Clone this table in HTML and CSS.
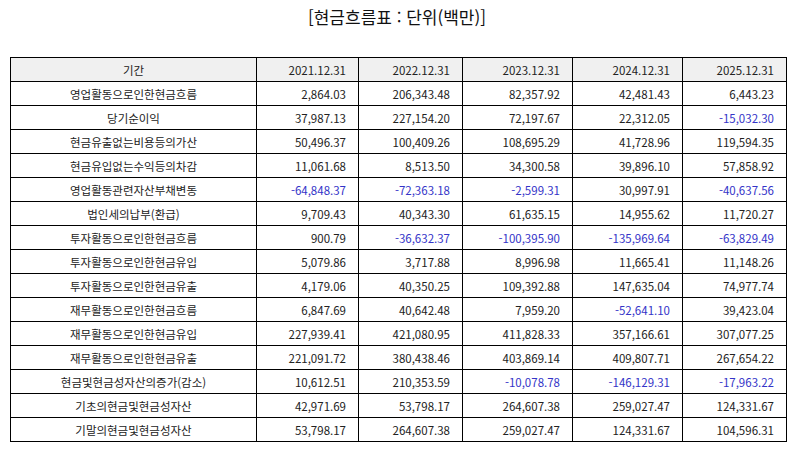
FILE: index.html
```html
<!DOCTYPE html>
<html lang="ko">
<head>
<meta charset="utf-8">
<link rel="stylesheet" href="styles.css">
</head>
<body>
<div class="title">[현금흐름표 : 단위(백만)]</div>
<table class="cf">
<colgroup>
<col class="c0"><col class="c1"><col class="c2"><col class="c3"><col class="c4"><col class="c5">
</colgroup>
<thead>
<tr><th>기간</th><th class="num">2021.12.31</th><th class="num">2022.12.31</th><th class="num">2023.12.31</th><th class="num">2024.12.31</th><th class="num">2025.12.31</th></tr>
</thead>
<tbody>
<tr><td>영업활동으로인한현금흐름</td><td class="num">2,864.03</td><td class="num">206,343.48</td><td class="num">82,357.92</td><td class="num">42,481.43</td><td class="num">6,443.23</td></tr>
<tr><td>당기순이익</td><td class="num">37,987.13</td><td class="num">227,154.20</td><td class="num">72,197.67</td><td class="num">22,312.05</td><td class="num neg">-15,032.30</td></tr>
<tr><td>현금유출없는비용등의가산</td><td class="num">50,496.37</td><td class="num">100,409.26</td><td class="num">108,695.29</td><td class="num">41,728.96</td><td class="num">119,594.35</td></tr>
<tr><td>현금유입없는수익등의차감</td><td class="num">11,061.68</td><td class="num">8,513.50</td><td class="num">34,300.58</td><td class="num">39,896.10</td><td class="num">57,858.92</td></tr>
<tr><td>영업활동관련자산부채변동</td><td class="num neg">-64,848.37</td><td class="num neg">-72,363.18</td><td class="num neg">-2,599.31</td><td class="num">30,997.91</td><td class="num neg">-40,637.56</td></tr>
<tr><td>법인세의납부(환급)</td><td class="num">9,709.43</td><td class="num">40,343.30</td><td class="num">61,635.15</td><td class="num">14,955.62</td><td class="num">11,720.27</td></tr>
<tr><td>투자활동으로인한현금흐름</td><td class="num">900.79</td><td class="num neg">-36,632.37</td><td class="num neg">-100,395.90</td><td class="num neg">-135,969.64</td><td class="num neg">-63,829.49</td></tr>
<tr><td>투자활동으로인한현금유입</td><td class="num">5,079.86</td><td class="num">3,717.88</td><td class="num">8,996.98</td><td class="num">11,665.41</td><td class="num">11,148.26</td></tr>
<tr><td>투자활동으로인한현금유출</td><td class="num">4,179.06</td><td class="num">40,350.25</td><td class="num">109,392.88</td><td class="num">147,635.04</td><td class="num">74,977.74</td></tr>
<tr><td>재무활동으로인한현금흐름</td><td class="num">6,847.69</td><td class="num">40,642.48</td><td class="num">7,959.20</td><td class="num neg">-52,641.10</td><td class="num">39,423.04</td></tr>
<tr><td>재무활동으로인한현금유입</td><td class="num">227,939.41</td><td class="num">421,080.95</td><td class="num">411,828.33</td><td class="num">357,166.61</td><td class="num">307,077.25</td></tr>
<tr><td>재무활동으로인한현금유출</td><td class="num">221,091.72</td><td class="num">380,438.46</td><td class="num">403,869.14</td><td class="num">409,807.71</td><td class="num">267,654.22</td></tr>
<tr><td>현금및현금성자산의증가(감소)</td><td class="num">10,612.51</td><td class="num">210,353.59</td><td class="num neg">-10,078.78</td><td class="num neg">-146,129.31</td><td class="num neg">-17,963.22</td></tr>
<tr><td>기초의현금및현금성자산</td><td class="num">42,971.69</td><td class="num">53,798.17</td><td class="num">264,607.38</td><td class="num">259,027.47</td><td class="num">124,331.67</td></tr>
<tr><td>기말의현금및현금성자산</td><td class="num">53,798.17</td><td class="num">264,607.38</td><td class="num">259,027.47</td><td class="num">124,331.67</td><td class="num">104,596.31</td></tr>
</tbody>
</table>
</body>
</html>
```
FILE: styles.css
```css
html, body {
  margin: 0;
  padding: 0;
  background: #ffffff;
}
body {
  font-family: "Noto Sans CJK KR", "Noto Sans", sans-serif;
  color: #222222;
}
.title {
  height: 39px;
  padding-top: 3px;
  box-sizing: border-box;
  text-align: center;
  font-size: 17px;
  line-height: 28px;
  color: #111111;
  margin-bottom: 18px;
}
.cf {
  margin-left: 10px;
  border-collapse: collapse;
  table-layout: fixed;
  width: 776px;
  font-size: 11.5px;
}
.c0 { width: 246px; }
.c1 { width: 102px; }
.c2 { width: 104px; }
.c3 { width: 110px; }
.c4 { width: 110px; }
.c5 { width: 104px; }
.cf th, .cf td {
  border: 1px solid #000000;
  height: 24px;
  line-height: 14px;
  padding: 0 12px;
  font-weight: normal;
  text-align: center;
  white-space: nowrap;
  box-sizing: border-box;
}
.cf th {
  background: #f0f0f0;
}
.cf .num {
  text-align: right;
}
.cf .neg {
  color: #3434c8;
}
```
